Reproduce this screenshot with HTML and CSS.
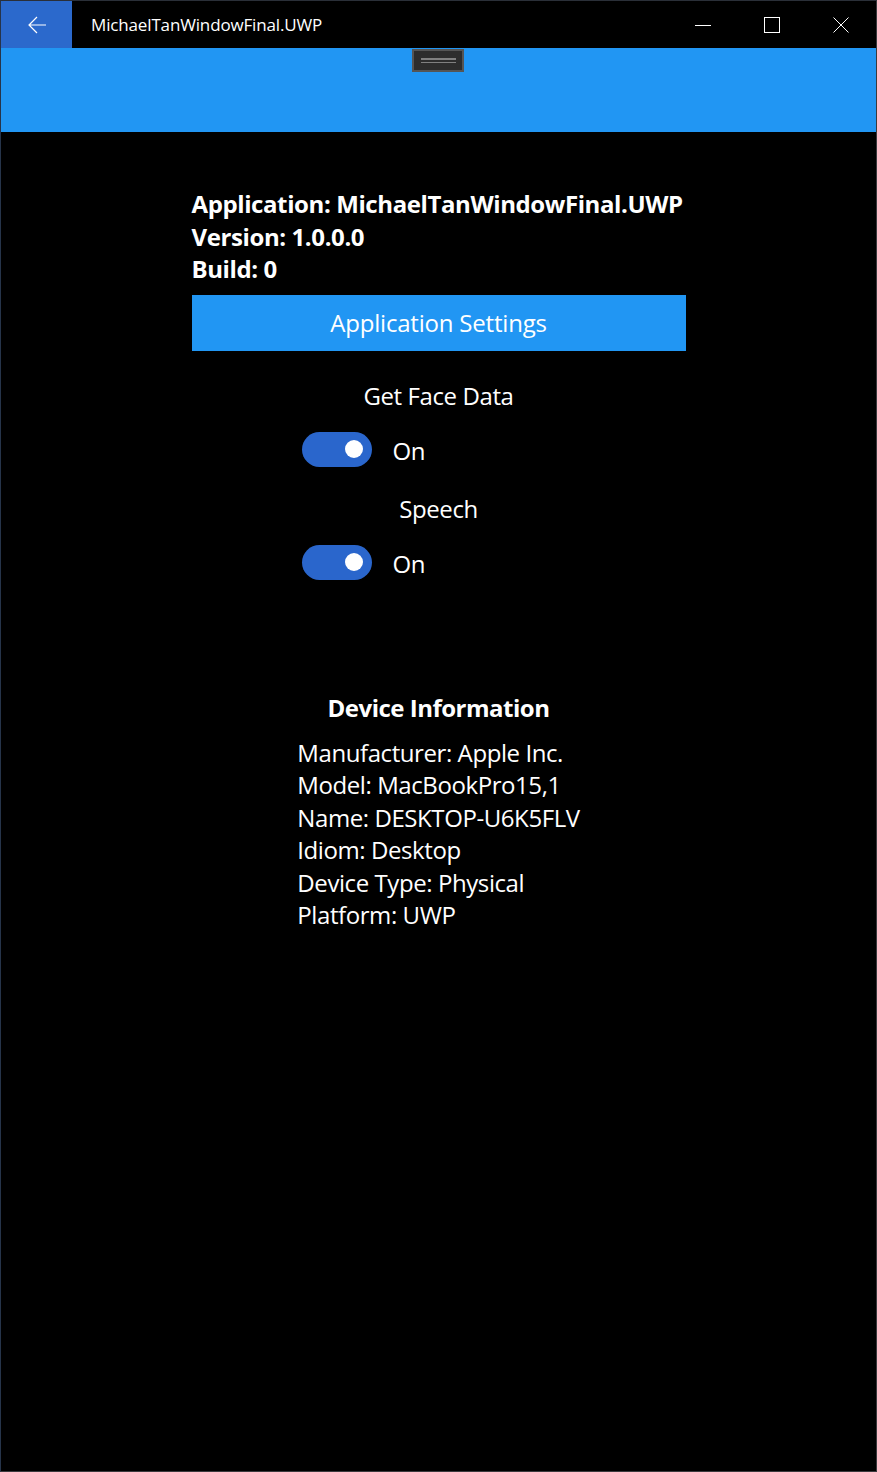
FILE: index.html
```html
<!DOCTYPE html>
<html lang="en">
<head>
<meta charset="utf-8">
<title>MichaelTanWindowFinal.UWP</title>
<link rel="stylesheet" href="styles.css">
</head>
<body>
<div class="window">
  <header class="titlebar">
    <button class="back" aria-label="Back">
      <svg width="20" height="20" viewBox="0 0 20 20" aria-hidden="true">
        <path d="M19 10H2M10 2L2 10L10 18" fill="none" stroke="#fff" stroke-width="1.2"/>
      </svg>
    </button>
    <span class="title">MichaelTanWindowFinal.UWP</span>
    <div class="caption">
      <span class="cap-btn">
        <svg width="16" height="16" viewBox="0 0 16 16"><path d="M0 8.5H16" stroke="#fff" stroke-width="1"/></svg>
      </span>
      <span class="cap-btn">
        <svg width="16" height="16" viewBox="0 0 16 16"><rect x="0.5" y="0.5" width="15" height="15" fill="none" stroke="#fff" stroke-width="1"/></svg>
      </span>
      <span class="cap-btn">
        <svg width="16" height="16" viewBox="0 0 16 16"><path d="M0.5 0.5L15.5 15.5M15.5 0.5L0.5 15.5" stroke="#fff" stroke-width="1"/></svg>
      </span>
    </div>
  </header>
  <div class="band">
    <div class="handle"><span></span><span></span></div>
  </div>
  <main class="content">
    <div class="app-info">
      <div>Application: MichaelTanWindowFinal.UWP</div>
      <div>Version: 1.0.0.0</div>
      <div>Build: 0</div>
    </div>
    <button class="settings">Application Settings</button>
    <div class="label first">Get Face Data</div>
    <div class="toggle-row">
      <span class="toggle"><span class="knob"></span></span>
      <span class="state">On</span>
    </div>
    <div class="label">Speech</div>
    <div class="toggle-row">
      <span class="toggle"><span class="knob"></span></span>
      <span class="state">On</span>
    </div>
    <h2 class="device-title">Device Information</h2>
    <div class="device-list">
      <div>Manufacturer: Apple Inc.</div>
      <div>Model: MacBookPro15,1</div>
      <div>Name: DESKTOP-U6K5FLV</div>
      <div>Idiom: Desktop</div>
      <div>Device Type: Physical</div>
      <div>Platform: UWP</div>
    </div>
  </main>
</div>
</body>
</html>
```

FILE: styles.css
```css
html, body {
  margin: 0;
  padding: 0;
  background: #000;
}
body {
  font-family: "Open Sans", "Noto Sans", sans-serif;
  color: #fff;
}
.window {
  box-sizing: border-box;
  width: 877px;
  height: 1472px;
  border-top: 1px solid #2a2f38;
  border-left: 1px solid #26344a;
  border-right: 1px solid #3a3a3e;
  border-bottom: 1px solid #3a3a3e;
  background: #000;
  display: flex;
  flex-direction: column;
  overflow: hidden;
}
.titlebar {
  height: 47px;
  display: flex;
  align-items: center;
  background: #000;
  flex-shrink: 0;
}
.back {
  width: 72px;
  height: 47px;
  margin-left: -1px;
  border: 0;
  padding: 0;
  background: #2b69cc;
  display: flex;
  align-items: center;
  justify-content: center;
}
.back svg { margin-left: 1px; }
.title {
  margin-left: 19px;
  font-size: 17px;
  letter-spacing: -0.15px;
  color: #fff;
  flex: 1;
}
.caption {
  display: flex;
  height: 47px;
  margin-right: 1px;
}
.cap-btn {
  width: 69px;
  height: 47px;
  display: flex;
  align-items: center;
  justify-content: center;
}
.band {
  height: 84px;
  background: #2196f3;
  display: flex;
  justify-content: center;
  flex-shrink: 0;
}
.handle {
  box-sizing: border-box;
  width: 52px;
  height: 23px;
  margin-top: 1px;
  margin-left: -1px;
  border: 2px solid #555;
  background: #2d2d2d;
  display: flex;
  flex-direction: column;
  align-items: center;
  justify-content: center;
  gap: 2px;
}
.handle span {
  display: block;
  width: 35px;
  height: 1.5px;
  background: #808080;
}
.content {
  width: 494px;
  margin: 0 auto;
  padding-top: 56px;
  display: flex;
  flex-direction: column;
}
.app-info {
  font-weight: 700;
  font-size: 24px;
  letter-spacing: -0.4px;
  line-height: 32.5px;
}
.settings {
  margin-top: 9px;
  height: 56px;
  border: 0;
  background: #2196f3;
  color: #fff;
  font-family: inherit;
  font-size: 24px;
  letter-spacing: -0.2px;
  padding: 0;
}
.label {
  text-align: center;
  font-size: 24px;
  letter-spacing: -0.4px;
  line-height: 32px;
  margin-top: 26px;
}
.label.first { margin-top: 29px; }
.toggle-row {
  width: 274px;
  align-self: center;
  margin-top: 20px;
  display: flex;
  align-items: center;
  height: 35px;
}
.toggle {
  box-sizing: border-box;
  width: 70px;
  height: 35px;
  border-radius: 18px;
  background: #2a66cc;
  position: relative;
  display: block;
}
.knob {
  position: absolute;
  width: 18px;
  height: 18px;
  border-radius: 50%;
  background: #fff;
  right: 9px;
  top: 8.5px;
}
.state {
  margin-left: 21px;
  font-size: 24px;
  letter-spacing: -0.3px;
  line-height: 32px;
  padding-top: 4px;
}
.device-title {
  margin: 112px 0 0;
  text-align: center;
  font-size: 24px;
  letter-spacing: -0.5px;
  font-weight: 700;
  line-height: 32px;
}
.device-list {
  align-self: center;
  margin-top: 13px;
  font-size: 24px;
  letter-spacing: -0.42px;
  line-height: 32.6px;
}
```
